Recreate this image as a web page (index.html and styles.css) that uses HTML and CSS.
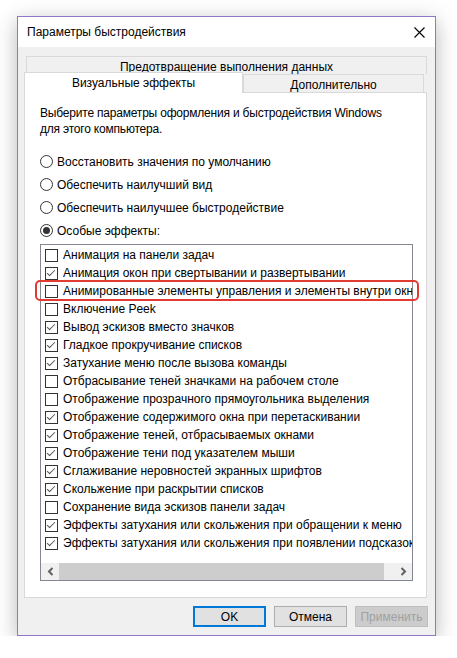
FILE: index.html
```html
<!DOCTYPE html>
<html lang="ru">
<head>
<meta charset="utf-8">
<title>Параметры быстродействия</title>
<link rel="stylesheet" href="styles.css">
</head>
<body>
<div class="window">
  <div class="titlebar">
    <span class="title">Параметры быстродействия</span>
    <svg class="close" width="11" height="11" viewBox="0 0 11 11"><path d="M0.5 0.5L10.5 10.5M10.5 0.5L0.5 10.5" stroke="#000" stroke-width="1.1" fill="none"/></svg>
  </div>
  <div class="body">
    <div class="tab back">Предотвращение выполнения данных</div>
    <div class="tabrow">
      <div class="tab active">Визуальные эффекты</div>
      <div class="tab inactive">Дополнительно</div>
    </div>
    <div class="panel">
      <p class="desc">Выберите параметры оформления и быстродействия Windows<br>для этого компьютера.</p>
      <div class="radios">
        <div class="radio"><span class="circle"></span>Восстановить значения по умолчанию</div>
        <div class="radio"><span class="circle"></span>Обеспечить наилучший вид</div>
        <div class="radio"><span class="circle"></span>Обеспечить наилучшее быстродействие</div>
        <div class="radio"><span class="circle on"></span>Особые эффекты:</div>
      </div>
      <div class="listbox">
        <div class="items">
          <div class="item"><span class="box"></span>Анимация на панели задач</div>
          <div class="item"><span class="box on"></span>Анимация окон при свертывании и развертывании</div>
          <div class="item"><span class="box"></span>Анимированные элементы управления и элементы внутри окна</div>
          <div class="item"><span class="box"></span>Включение Peek</div>
          <div class="item"><span class="box on"></span>Вывод эскизов вместо значков</div>
          <div class="item"><span class="box on"></span>Гладкое прокручивание списков</div>
          <div class="item"><span class="box on"></span>Затухание меню после вызова команды</div>
          <div class="item"><span class="box"></span>Отбрасывание теней значками на рабочем столе</div>
          <div class="item"><span class="box"></span>Отображение прозрачного прямоугольника выделения</div>
          <div class="item"><span class="box on"></span>Отображение содержимого окна при перетаскивании</div>
          <div class="item"><span class="box on"></span>Отображение теней, отбрасываемых окнами</div>
          <div class="item"><span class="box on"></span>Отображение тени под указателем мыши</div>
          <div class="item"><span class="box on"></span>Сглаживание неровностей экранных шрифтов</div>
          <div class="item"><span class="box on"></span>Скольжение при раскрытии списков</div>
          <div class="item"><span class="box"></span>Сохранение вида эскизов панели задач</div>
          <div class="item"><span class="box on"></span>Эффекты затухания или скольжения при обращении к меню</div>
          <div class="item"><span class="box on"></span>Эффекты затухания или скольжения при появлении подсказок</div>
        </div>
        <div class="hscroll">
          <span class="arrow"><svg width="7" height="9" viewBox="0 0 7 9"><path d="M5.5 1L2 4.5L5.5 8" stroke="#606060" stroke-width="2" fill="none"/></svg></span>
          <span class="thumb"></span>
          <span class="track"></span>
          <span class="arrow"><svg width="7" height="9" viewBox="0 0 7 9"><path d="M1.5 1L5 4.5L1.5 8" stroke="#606060" stroke-width="2" fill="none"/></svg></span>
        </div>
      </div>
    </div>
    <div class="buttons">
      <div class="btn default">OK</div>
      <div class="btn">Отмена</div>
      <div class="btn disabled">Применить</div>
    </div>
  </div>
  <div class="highlight"></div>
</div>
</body>
</html>
```
FILE: styles.css
```css
html, body {
  margin: 0;
  padding: 0;
  background: #ffffff;
}
body {
  font-family: "Liberation Sans", "Noto Sans", "DejaVu Sans", sans-serif;
  font-size: 12px;
  color: #000;
}
.window {
  position: relative;
  margin: 16px 0 0 17px;
  width: 419px;
  box-sizing: border-box;
  border: 1px solid #8f78c8;
  background: #f0f0f0;
  box-shadow: 0 5px 20px rgba(0,0,0,0.28);
}
.titlebar {
  height: 30px;
  background: #fff;
  display: flex;
  align-items: center;
  justify-content: space-between;
  padding: 0 10px 0 9px;
}
.title {
  line-height: 16px;
}
.close {
  display: block;
  margin-top: 1px;
}
.body {
  padding: 9px 7px 8px 0;
}
.tab {
  box-sizing: border-box;
  border: 1px solid #d9d9d9;
  border-bottom: none;
  text-align: center;
  line-height: 16px;
}
.tab.back {
  margin-left: 8px;
  width: 401px;
  height: 18px;
  padding-top: 2px;
  background: #f0f0f0;
  overflow: hidden;
}
.tabrow {
  display: flex;
  align-items: flex-end;
  margin-top: -2px;
  margin-left: 6px;
  height: 20px;
  position: relative;
  z-index: 1;
}
.tab.active {
  width: 219px;
  height: 21px;
  margin-bottom: -1px;
  background: #fff;
  padding-top: 2px;
}
.tab.inactive {
  width: 181px;
  height: 18px;
  background: #f0f0f0;
  padding-top: 2px;
}
.panel {
  margin-left: 6px;
  width: 403px;
  height: 506px;
  box-sizing: border-box;
  border: 1px solid #d9d9d9;
  background: #fff;
  padding: 12px 0 0 15px;
}
.desc {
  margin: 0 0 13px 0;
  line-height: 16px;
  letter-spacing: -0.2px;
}
.radio {
  height: 23px;
  display: flex;
  align-items: center;
  white-space: nowrap;
}
.circle {
  width: 13px;
  height: 13px;
  box-sizing: border-box;
  border: 1px solid #333;
  border-radius: 50%;
  margin-right: 4px;
  display: flex;
  align-items: center;
  justify-content: center;
  flex: none;
}
.circle.on::after {
  content: "";
  width: 7px;
  height: 7px;
  border-radius: 50%;
  background: #333;
}
.listbox {
  margin-top: 2px;
  width: 373px;
  height: 337px;
  box-sizing: border-box;
  border: 1px solid #828790;
  display: flex;
  flex-direction: column;
}
.items {
  height: 318px;
  padding-top: 1px;
  box-sizing: border-box;
  overflow: hidden;
}
.item {
  height: 18px;
  display: flex;
  align-items: center;
  white-space: nowrap;
  overflow: hidden;
}
.box {
  width: 13px;
  height: 13px;
  box-sizing: border-box;
  border: 1px solid #333;
  margin: 0 5px 0 4px;
  flex: none;
  position: relative;
}
.box.on::after {
  content: "";
  position: absolute;
  left: 3px;
  top: 0px;
  width: 3px;
  height: 7px;
  border-right: 1px solid #555;
  border-bottom: 1px solid #555;
  transform: rotate(45deg);
  transform-origin: center;
}
.hscroll {
  height: 17px;
  display: flex;
  background: #f0f0f0;
}
.arrow {
  width: 18px;
  display: flex;
  align-items: center;
  justify-content: center;
  flex: none;
}
.thumb {
  width: 325px;
  background: #cdcdcd;
  flex: none;
}
.track {
  flex: 1;
}
.buttons {
  display: flex;
  justify-content: flex-end;
  gap: 8px;
  margin-top: 8px;
}
.btn {
  width: 73px;
  height: 21px;
  box-sizing: border-box;
  border: 1px solid #adadad;
  background: #e1e1e1;
  display: flex;
  align-items: center;
  justify-content: center;
}
.btn.default {
  border: 2px solid #0078d7;
}
.btn.disabled {
  border-color: #bfbfbf;
  background: #cccccc;
  color: #a0a0a0;
}
.highlight {
  position: absolute;
  left: 17px;
  top: 263px;
  width: 384px;
  height: 21px;
  box-sizing: border-box;
  border: 2px solid #e23b32;
  border-radius: 5px;
}
```
